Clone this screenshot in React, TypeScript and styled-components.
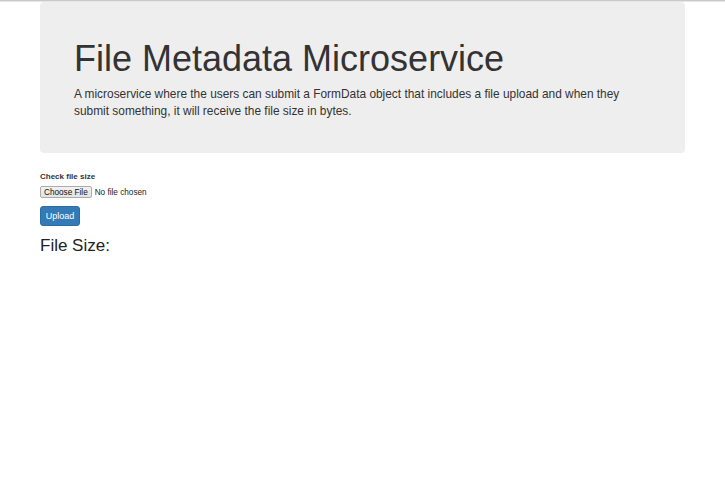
import React from "react";
import styled, { createGlobalStyle } from "styled-components";

const GlobalStyle = createGlobalStyle`
  html, body {
    margin: 0;
    padding: 0;
    background: #ffffff;
  }
  body {
    font-family: "Liberation Sans", Arial, Helvetica, sans-serif;
    color: #333333;
  }
`;

const TopRule = styled.div`
  height: 2px;
  background: linear-gradient(#c9c9c9 0 1px, #e6e6e6 1px 2px);
`;

const Container = styled.div`
  padding: 0 40px;
`;

const Jumbotron = styled.header`
  background: #eeeeee;
  border-radius: 4px;
  padding: 37px 34px 33px;
`;

const Title = styled.h1`
  margin: 0;
  font-size: 36px;
  line-height: 40px;
  font-weight: 400;
  color: #333333;
`;

const Lead = styled.p`
  margin: 7px 0 0;
  font-size: 11.9px;
  line-height: 17px;
  color: #333333;
`;

const Form = styled.form`
  margin-top: 18px;
  display: flex;
  flex-direction: column;
  align-items: flex-start;
`;

const Label = styled.label`
  display: block;
  font-size: 8px;
  line-height: 11px;
  font-weight: 700;
  color: #333333;
  margin-bottom: 4px;
`;

const FileRow = styled.div`
  display: flex;
  align-items: center;
  gap: 3px;
  height: 12px;
`;

const FileButton = styled.span`
  display: inline-flex;
  align-items: center;
  justify-content: center;
  box-sizing: border-box;
  height: 12px;
  padding: 0 3px;
  background: linear-gradient(#f2f2f2, #e3e3e3);
  border: 1px solid #ababab;
  border-radius: 2px;
  font-size: 8.2px;
  color: #111111;
`;

const FileStatus = styled.span`
  font-size: 8.2px;
  color: #222222;
`;

const UploadButton = styled.button`
  margin-top: 8px;
  box-sizing: border-box;
  width: 40px;
  height: 20px;
  padding: 0;
  background: #337ab7;
  border: 1px solid #2e6da4;
  border-radius: 3px;
  color: #ffffff;
  font-family: "Liberation Sans", Arial, sans-serif;
  font-size: 9px;
  line-height: 18px;
  cursor: pointer;
`;

const Result = styled.h2`
  margin: 10px 0 0;
  font-size: 17px;
  line-height: 19px;
  font-weight: 400;
  color: #222222;
`;

export default function App() {
  return (
    <>
      <GlobalStyle />
      <TopRule />
      <Container>
        <Jumbotron>
          <Title>File Metadata Microservice</Title>
          <Lead>
            A microservice where the users can submit a FormData object that includes a file upload and when they
            submit something, it will receive the file size in bytes.
          </Lead>
        </Jumbotron>
        <Form onSubmit={(e) => e.preventDefault()}>
          <Label>Check file size</Label>
          <FileRow>
            <FileButton>Choose File</FileButton>
            <FileStatus>No file chosen</FileStatus>
          </FileRow>
          <UploadButton type="submit">Upload</UploadButton>
        </Form>
        <Result>File Size:</Result>
      </Container>
    </>
  );
}
